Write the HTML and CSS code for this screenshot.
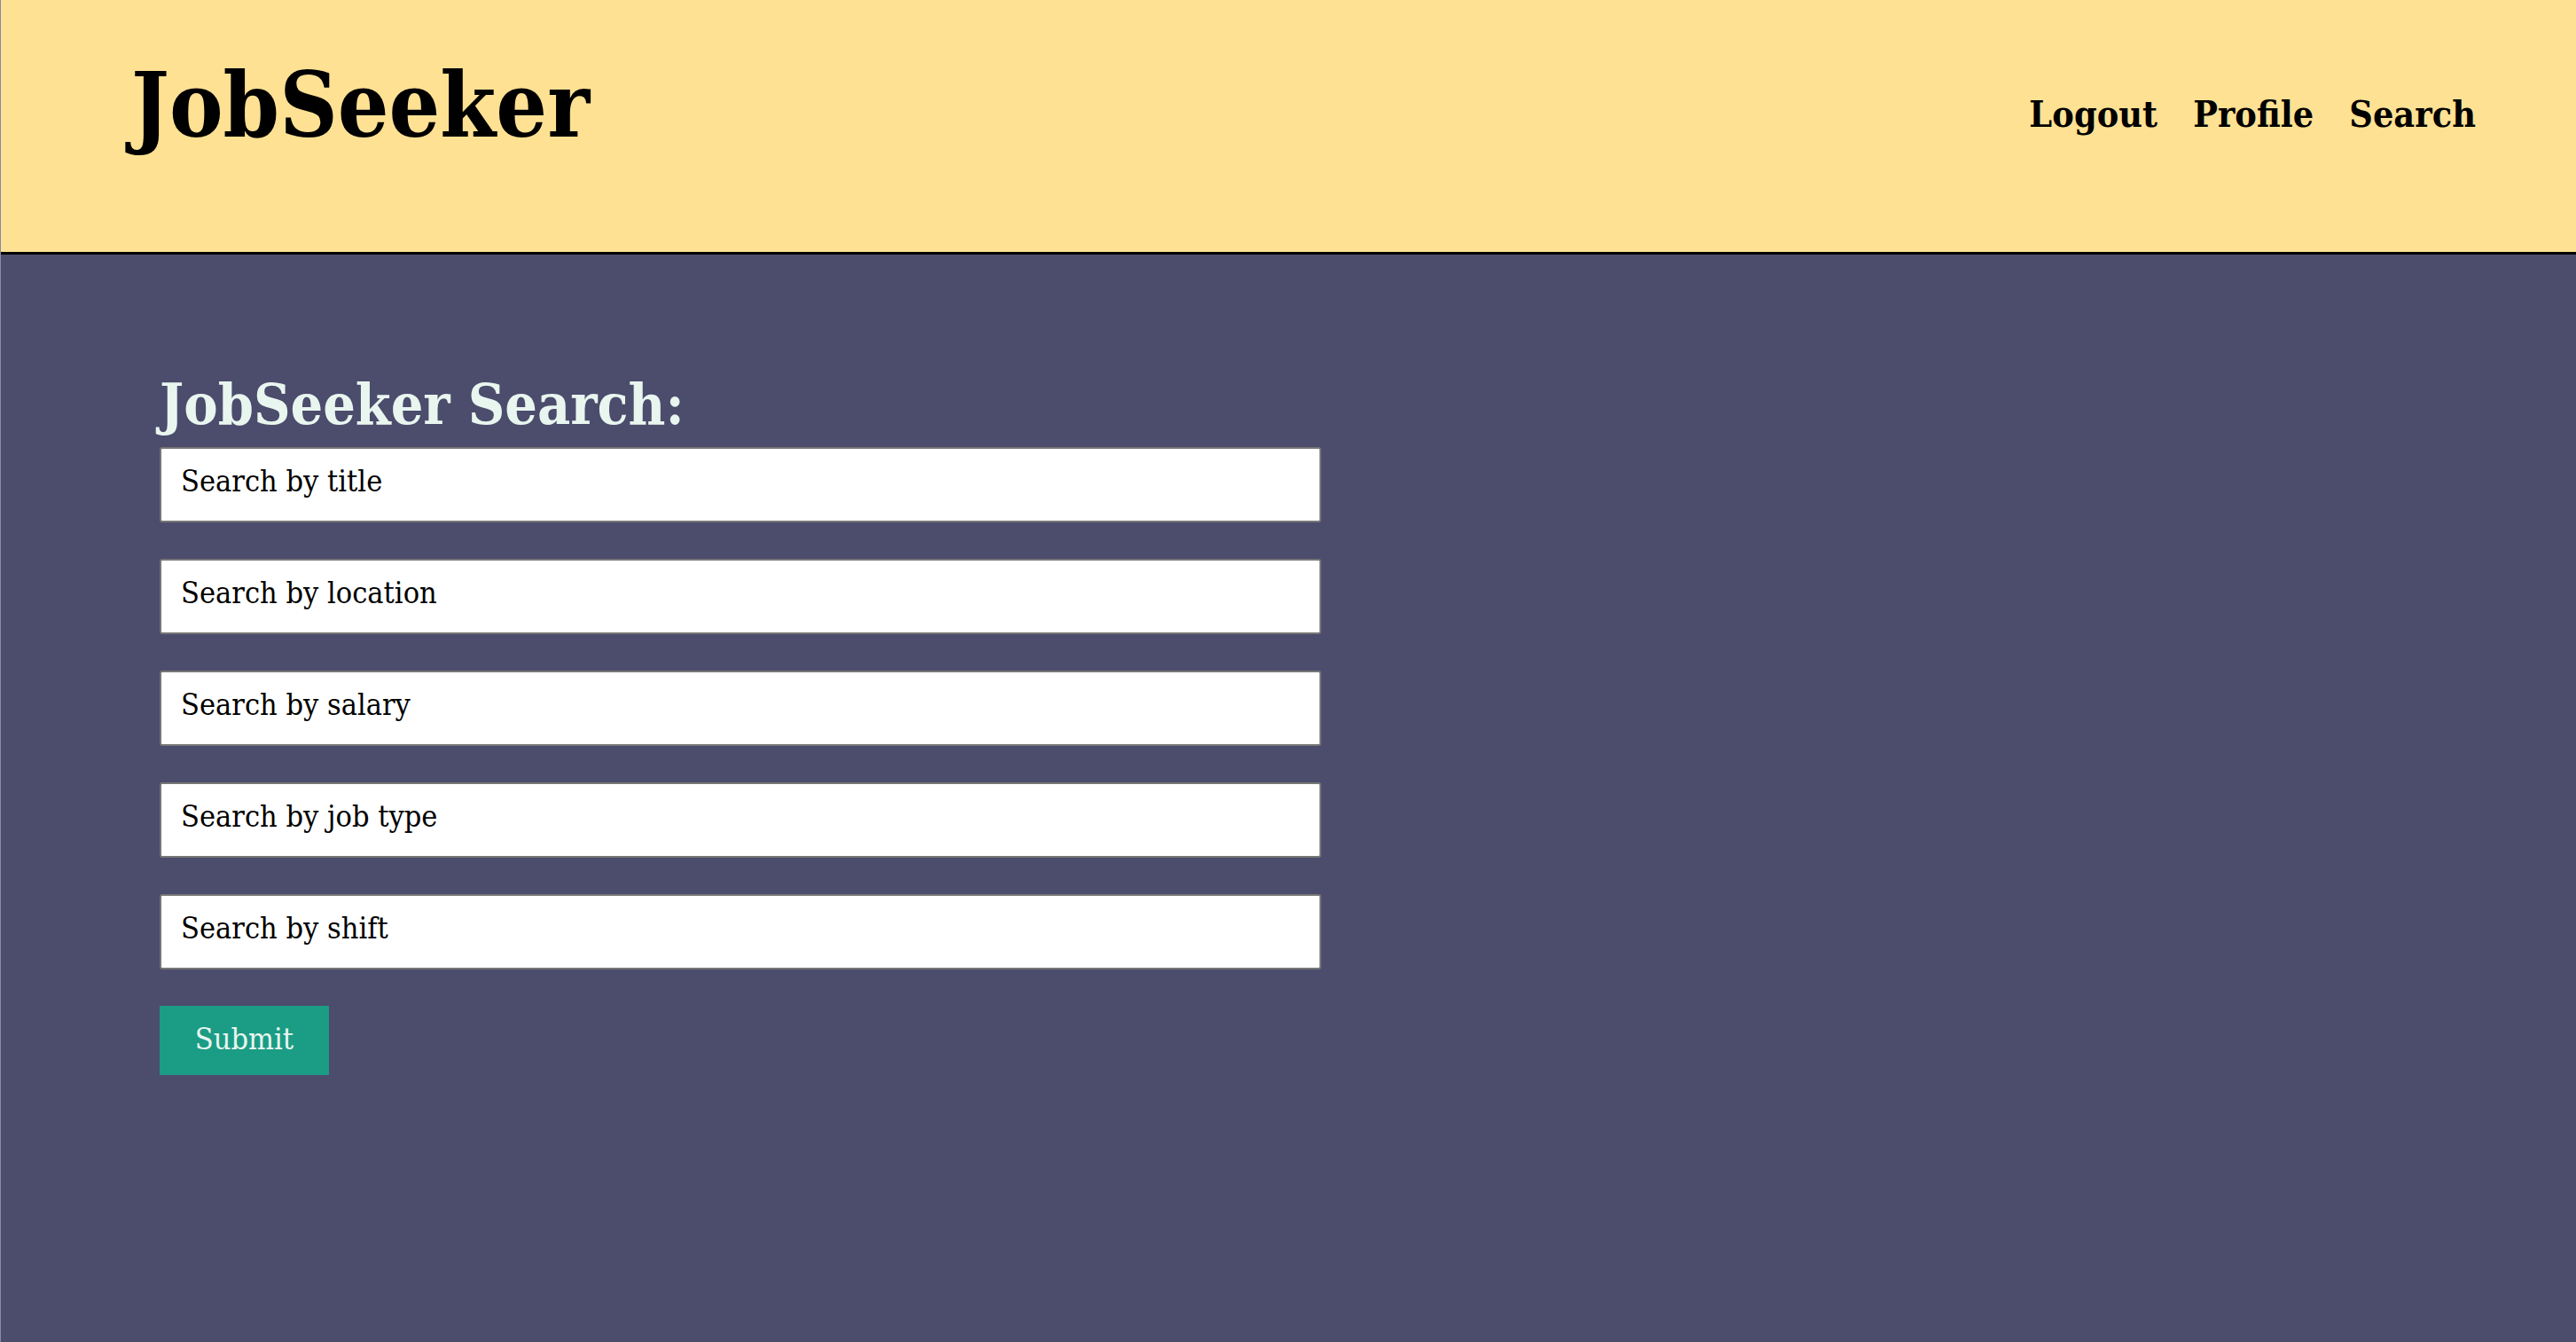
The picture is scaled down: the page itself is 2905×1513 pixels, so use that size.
FILE: index.html
```html
<!DOCTYPE html>
<html lang="en">
<head>
<meta charset="utf-8">
<title>JobSeeker</title>
<link rel="stylesheet" href="styles.css">
</head>
<body>
<header class="site-header">
  <a class="logo" href="#">JobSeeker</a>
  <nav class="nav">
    <a href="#">Logout</a>
    <a href="#">Profile</a>
    <a href="#">Search</a>
  </nav>
</header>
<main class="main">
  <h1 class="title">JobSeeker Search:</h1>
  <form class="search-form">
    <input class="field" type="text" placeholder="Search by title">
    <input class="field" type="text" placeholder="Search by location">
    <input class="field" type="text" placeholder="Search by salary">
    <input class="field" type="text" placeholder="Search by job type">
    <input class="field" type="text" placeholder="Search by shift">
    <button class="submit" type="button">Submit</button>
  </form>
</main>
</body>
</html>
```

FILE: styles.css
```css
* { box-sizing: border-box; }
html, body { margin: 0; padding: 0; }
body {
  background: #4C4C6D;
  min-height: 100vh;
  font-family: "DejaVu Serif Condensed", "DejaVu Serif", serif;
  border-left: 1px solid #8a8aa6;
}
.site-header {
  background: #FFE194;
  height: 287px;
  border-bottom: 3px solid #000;
  display: flex;
  justify-content: space-between;
  align-items: flex-start;
  padding: 0 113px 0 147px;
}
.logo {
  color: #000;
  text-decoration: none;
  font-weight: bold;
  font-size: 101px;
  line-height: 120px;
  margin-top: 59px;
}
.nav {
  display: flex;
  gap: 40px;
  margin-top: 99px;
}
.nav a {
  color: #000;
  text-decoration: none;
  font-weight: bold;
  font-size: 41px;
  line-height: 60px;
}
.main {
  padding: 0 0 0 179px;
}
.title {
  margin: 0;
  padding-top: 124px;
  color: #E8F6EF;
  font-size: 64px;
  line-height: 90px;
  font-weight: bold;
}
.search-form {
  display: flex;
  flex-direction: column;
  align-items: flex-start;
  gap: 41px;
  margin-top: 3px;
}
.field {
  width: 1310px;
  height: 85px;
  border: 2px solid #767676;
  border-radius: 3px;
  background: #fff;
  padding: 0 22px 10px;
  font-family: "DejaVu Serif Condensed", "DejaVu Serif", serif;
  font-size: 34px;
  color: #000;
}
.field::placeholder { color: #000; opacity: 1; }
.submit {
  width: 191px;
  height: 78px;
  border: none;
  background: #1B9C85;
  color: #E8F6EF;
  font-family: "DejaVu Serif Condensed", "DejaVu Serif", serif;
  font-size: 34px;
  padding: 0 0 4px;
}
```
